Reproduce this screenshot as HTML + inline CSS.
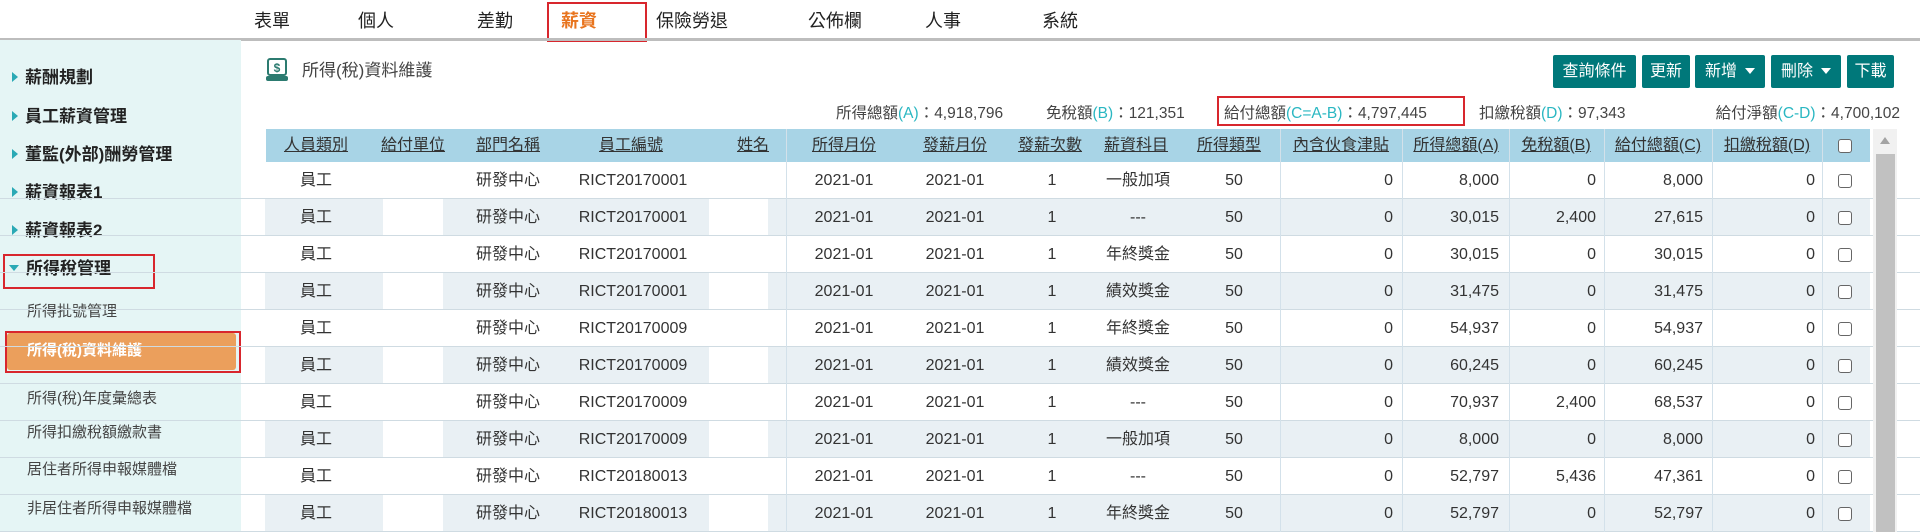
<!DOCTYPE html>
<html><head><meta charset="utf-8">
<style>
*{margin:0;padding:0;box-sizing:border-box}
body{width:1920px;height:532px;overflow:hidden;background:#fff;font-family:"Liberation Sans","Noto Sans CJK TC",sans-serif;color:#333;position:relative;line-height:20px}
.a{position:absolute;white-space:nowrap;line-height:20px}
.nav{font-size:18px;color:#222;top:11px}
.side{position:absolute;left:0;top:40px;width:241px;height:492px;background:#e5f5f5}
.si{position:absolute;left:12px;font-size:17px;font-weight:bold;color:#222;line-height:20px}
.si:before{content:"";display:inline-block;border-left:6px solid #2aa9b5;border-top:5px solid transparent;border-bottom:5px solid transparent;margin-right:7px;vertical-align:1px}
.sub{position:absolute;left:27px;font-size:15px;color:#444;line-height:20px}
.btn{position:absolute;top:55px;height:33px;background:#00787a;color:#fff;font-size:16px;line-height:33px;text-align:center;border-radius:2px}
.tri{display:inline-block;border-top:6px solid #fff;border-left:5px solid transparent;border-right:5px solid transparent;margin-left:8px;vertical-align:2px}
.sum{position:absolute;top:104px;font-size:15.5px;color:#444;white-space:nowrap;line-height:20px}
.sum b{font-weight:normal;color:#2ab7c2}
.hd{position:absolute;left:266px;top:129px;width:1604px;height:33px;background:#a8d4e6}
.hd .a{top:7px;font-size:16px;text-decoration:underline;color:#333;transform:translateX(-50%)}
.row{position:absolute;left:0;width:1920px;height:37px;border-bottom:1px solid #cfdbe2}
.row .bg{position:absolute;top:0;bottom:0;background:#e9f0f4}
.row .a{top:9px;font-size:16px}
.c{transform:translateX(-50%)}
.vl{position:absolute;top:129px;width:1px;height:403px;background:#d3e1ea}
.cb{position:absolute;width:14px;height:14px;border:1px solid #666;border-radius:3px;background:#fff}
</style></head><body>
<div class="a nav" style="left:254px">表單</div>
<div class="a nav" style="left:358px">個人</div>
<div class="a nav" style="left:477px">差勤</div>
<div class="a nav" style="left:561px;color:#e8741e;font-weight:bold">薪資</div>
<div style="position:absolute;left:547px;top:2px;width:100px;height:40px;border:2px solid #d8262d"></div>
<div class="a nav" style="left:656px">保險勞退</div>
<div class="a nav" style="left:808px">公佈欄</div>
<div class="a nav" style="left:925px">人事</div>
<div class="a nav" style="left:1042px">系統</div>
<div style="position:absolute;left:0;top:38px;width:1920px;height:3px;background:#bdbdbd"></div>

<div class="side">
<div class="si" style="top:28px">薪酬規劃</div>
<div class="si" style="top:67px">員工薪資管理</div>
<div class="si" style="top:105px">董監(外部)酬勞管理</div>
<div class="si" style="top:143px">薪資報表1</div>
<div class="si" style="top:181px">薪資報表2</div>
<div class="si" style="top:219px;left:9px">所得稅管理</div>
<div class="sub" style="top:262px">所得批號管理</div>
<div style="position:absolute;left:7px;top:293px;width:229px;height:37px;background:#eb9f5c;border-radius:3px"></div>
<div class="sub" style="top:301px;color:#fff;font-weight:bold">所得(稅)資料維護</div>
<div class="sub" style="top:349px">所得(稅)年度彙總表</div>
<div class="sub" style="top:383px">所得扣繳稅額繳款書</div>
<div class="sub" style="top:420px">居住者所得申報媒體檔</div>
<div class="sub" style="top:459px">非居住者所得申報媒體檔</div>
</div>
<style>.side .si:nth-child(6):before{border-top:6px solid #2aa9b5;border-left:5px solid transparent;border-right:5px solid transparent;border-bottom:0;vertical-align:3px}</style>
<div style="position:absolute;left:3px;top:254px;width:152px;height:35px;border:2px solid #d8262d"></div>
<div style="position:absolute;left:5px;top:331px;width:236px;height:42px;border:2px solid #d8262d"></div>

<svg class="a" style="left:265px;top:58px" width="26" height="24" viewBox="0 0 26 24"><rect x="3" y="1" width="18" height="16" rx="2" fill="#fff" stroke="#2c7b70" stroke-width="2"/><text x="12" y="14" font-size="12" font-family="Liberation Sans" font-weight="bold" fill="#2c7b70" text-anchor="middle">$</text><rect x="1" y="18" width="22" height="5" rx="2" fill="#2c7b70"/></svg>
<div class="a" style="left:302px;top:61px;font-size:17px;color:#444">所得(稅)資料維護</div>

<div class="btn" style="left:1553px;width:83px">查詢條件</div>
<div class="btn" style="left:1642px;width:48px">更新</div>
<div class="btn" style="left:1695px;width:70px">新增<i class="tri"></i></div>
<div class="btn" style="left:1771px;width:70px">刪除<i class="tri"></i></div>
<div class="btn" style="left:1847px;width:47px">下載</div>

<div class="sum" style="left:836px">所得總額<b>(A)</b>：4,918,796</div>
<div class="sum" style="left:1046px">免稅額<b>(B)</b>：121,351</div>
<div class="sum" style="left:1224px">給付總額<b>(C=A-B)</b>：4,797,445</div>
<div class="sum" style="left:1479px">扣繳稅額<b>(D)</b>：97,343</div>
<div class="sum" style="right:20px">給付淨額<b>(C-D)</b>：4,700,102</div>
<div style="position:absolute;left:1217px;top:96px;width:248px;height:30px;border:2px solid #d8262d"></div>

<div class="hd">
<div class="a" style="left:50px">人員類別</div><div class="a" style="left:147px">給付單位</div><div class="a" style="left:242px">部門名稱</div><div class="a" style="left:365px">員工編號</div><div class="a" style="left:487px">姓名</div><div class="a" style="left:578px">所得月份</div><div class="a" style="left:689px">發薪月份</div><div class="a" style="left:784px">發薪次數</div><div class="a" style="left:870px">薪資科目</div><div class="a" style="left:963px">所得類型</div><div class="a" style="left:1075px">內含伙食津貼</div><div class="a" style="left:1190px">所得總額(A)</div><div class="a" style="left:1290px">免稅額(B)</div><div class="a" style="left:1392px">給付總額(C)</div><div class="a" style="left:1501px">扣繳稅額(D)</div>
<div class="cb" style="left:1572px;top:10px;transform:none"></div>
</div>

<div id="rows">
<div class="row" style="top:162px"><span class="a c" style="left:316px">員工</span><span class="a c" style="left:508px">研發中心</span><span class="a c" style="left:633px">RICT20170001</span><span class="a c" style="left:844px">2021-01</span><span class="a c" style="left:955px">2021-01</span><span class="a c" style="left:1052px">1</span><span class="a c" style="left:1138px">一般加項</span><span class="a c" style="left:1234px">50</span><span class="a" style="right:527px">0</span><span class="a" style="right:421px">8,000</span><span class="a" style="right:324px">0</span><span class="a" style="right:217px">8,000</span><span class="a" style="right:105px">0</span><div class="cb" style="left:1838px;top:12px"></div></div>
<div class="row" style="top:199px"><div class="bg" style="left:265px;width:118px"></div><div class="bg" style="left:443px;width:266px"></div><div class="bg" style="left:768px;width:1102px"></div><span class="a c" style="left:316px">員工</span><span class="a c" style="left:508px">研發中心</span><span class="a c" style="left:633px">RICT20170001</span><span class="a c" style="left:844px">2021-01</span><span class="a c" style="left:955px">2021-01</span><span class="a c" style="left:1052px">1</span><span class="a c" style="left:1138px">---</span><span class="a c" style="left:1234px">50</span><span class="a" style="right:527px">0</span><span class="a" style="right:421px">30,015</span><span class="a" style="right:324px">2,400</span><span class="a" style="right:217px">27,615</span><span class="a" style="right:105px">0</span><div class="cb" style="left:1838px;top:12px"></div></div>
<div class="row" style="top:236px"><span class="a c" style="left:316px">員工</span><span class="a c" style="left:508px">研發中心</span><span class="a c" style="left:633px">RICT20170001</span><span class="a c" style="left:844px">2021-01</span><span class="a c" style="left:955px">2021-01</span><span class="a c" style="left:1052px">1</span><span class="a c" style="left:1138px">年終獎金</span><span class="a c" style="left:1234px">50</span><span class="a" style="right:527px">0</span><span class="a" style="right:421px">30,015</span><span class="a" style="right:324px">0</span><span class="a" style="right:217px">30,015</span><span class="a" style="right:105px">0</span><div class="cb" style="left:1838px;top:12px"></div></div>
<div class="row" style="top:273px"><div class="bg" style="left:265px;width:118px"></div><div class="bg" style="left:443px;width:266px"></div><div class="bg" style="left:768px;width:1102px"></div><span class="a c" style="left:316px">員工</span><span class="a c" style="left:508px">研發中心</span><span class="a c" style="left:633px">RICT20170001</span><span class="a c" style="left:844px">2021-01</span><span class="a c" style="left:955px">2021-01</span><span class="a c" style="left:1052px">1</span><span class="a c" style="left:1138px">績效獎金</span><span class="a c" style="left:1234px">50</span><span class="a" style="right:527px">0</span><span class="a" style="right:421px">31,475</span><span class="a" style="right:324px">0</span><span class="a" style="right:217px">31,475</span><span class="a" style="right:105px">0</span><div class="cb" style="left:1838px;top:12px"></div></div>
<div class="row" style="top:310px"><span class="a c" style="left:316px">員工</span><span class="a c" style="left:508px">研發中心</span><span class="a c" style="left:633px">RICT20170009</span><span class="a c" style="left:844px">2021-01</span><span class="a c" style="left:955px">2021-01</span><span class="a c" style="left:1052px">1</span><span class="a c" style="left:1138px">年終獎金</span><span class="a c" style="left:1234px">50</span><span class="a" style="right:527px">0</span><span class="a" style="right:421px">54,937</span><span class="a" style="right:324px">0</span><span class="a" style="right:217px">54,937</span><span class="a" style="right:105px">0</span><div class="cb" style="left:1838px;top:12px"></div></div>
<div class="row" style="top:347px"><div class="bg" style="left:265px;width:118px"></div><div class="bg" style="left:443px;width:266px"></div><div class="bg" style="left:768px;width:1102px"></div><span class="a c" style="left:316px">員工</span><span class="a c" style="left:508px">研發中心</span><span class="a c" style="left:633px">RICT20170009</span><span class="a c" style="left:844px">2021-01</span><span class="a c" style="left:955px">2021-01</span><span class="a c" style="left:1052px">1</span><span class="a c" style="left:1138px">績效獎金</span><span class="a c" style="left:1234px">50</span><span class="a" style="right:527px">0</span><span class="a" style="right:421px">60,245</span><span class="a" style="right:324px">0</span><span class="a" style="right:217px">60,245</span><span class="a" style="right:105px">0</span><div class="cb" style="left:1838px;top:12px"></div></div>
<div class="row" style="top:384px"><span class="a c" style="left:316px">員工</span><span class="a c" style="left:508px">研發中心</span><span class="a c" style="left:633px">RICT20170009</span><span class="a c" style="left:844px">2021-01</span><span class="a c" style="left:955px">2021-01</span><span class="a c" style="left:1052px">1</span><span class="a c" style="left:1138px">---</span><span class="a c" style="left:1234px">50</span><span class="a" style="right:527px">0</span><span class="a" style="right:421px">70,937</span><span class="a" style="right:324px">2,400</span><span class="a" style="right:217px">68,537</span><span class="a" style="right:105px">0</span><div class="cb" style="left:1838px;top:12px"></div></div>
<div class="row" style="top:421px"><div class="bg" style="left:265px;width:118px"></div><div class="bg" style="left:443px;width:266px"></div><div class="bg" style="left:768px;width:1102px"></div><span class="a c" style="left:316px">員工</span><span class="a c" style="left:508px">研發中心</span><span class="a c" style="left:633px">RICT20170009</span><span class="a c" style="left:844px">2021-01</span><span class="a c" style="left:955px">2021-01</span><span class="a c" style="left:1052px">1</span><span class="a c" style="left:1138px">一般加項</span><span class="a c" style="left:1234px">50</span><span class="a" style="right:527px">0</span><span class="a" style="right:421px">8,000</span><span class="a" style="right:324px">0</span><span class="a" style="right:217px">8,000</span><span class="a" style="right:105px">0</span><div class="cb" style="left:1838px;top:12px"></div></div>
<div class="row" style="top:458px"><span class="a c" style="left:316px">員工</span><span class="a c" style="left:508px">研發中心</span><span class="a c" style="left:633px">RICT20180013</span><span class="a c" style="left:844px">2021-01</span><span class="a c" style="left:955px">2021-01</span><span class="a c" style="left:1052px">1</span><span class="a c" style="left:1138px">---</span><span class="a c" style="left:1234px">50</span><span class="a" style="right:527px">0</span><span class="a" style="right:421px">52,797</span><span class="a" style="right:324px">5,436</span><span class="a" style="right:217px">47,361</span><span class="a" style="right:105px">0</span><div class="cb" style="left:1838px;top:12px"></div></div>
<div class="row" style="top:495px"><div class="bg" style="left:265px;width:118px"></div><div class="bg" style="left:443px;width:266px"></div><div class="bg" style="left:768px;width:1102px"></div><span class="a c" style="left:316px">員工</span><span class="a c" style="left:508px">研發中心</span><span class="a c" style="left:633px">RICT20180013</span><span class="a c" style="left:844px">2021-01</span><span class="a c" style="left:955px">2021-01</span><span class="a c" style="left:1052px">1</span><span class="a c" style="left:1138px">年終獎金</span><span class="a c" style="left:1234px">50</span><span class="a" style="right:527px">0</span><span class="a" style="right:421px">52,797</span><span class="a" style="right:324px">0</span><span class="a" style="right:217px">52,797</span><span class="a" style="right:105px">0</span><div class="cb" style="left:1838px;top:12px"></div></div>
</div>

<div class="vl" style="left:786px"></div><div class="vl" style="left:1280px"></div><div class="vl" style="left:1402px"></div><div class="vl" style="left:1509px"></div><div class="vl" style="left:1604px"></div><div class="vl" style="left:1712px"></div><div class="vl" style="left:1822px"></div>

<div style="position:absolute;left:1873px;top:129px;width:24px;height:403px;background:#f1f1f1"></div>
<div style="position:absolute;left:1880px;top:137px;border-bottom:7px solid #a3a3a3;border-left:5px solid transparent;border-right:5px solid transparent"></div>
<div style="position:absolute;left:1876px;top:154px;width:19px;height:378px;background:#c1c1c1"></div>
</body></html>
